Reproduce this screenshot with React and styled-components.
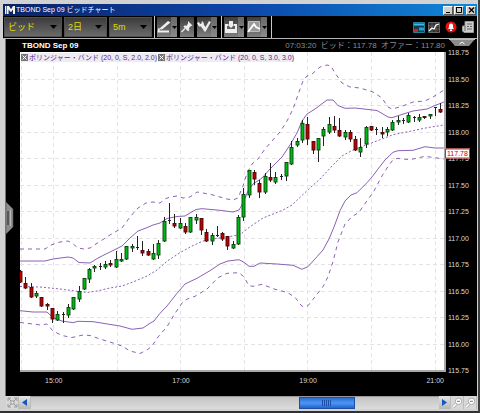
import React, { useState } from "react";
import styled, { createGlobalStyle, css } from "styled-components";

// top of wick, top of body, bottom of body, bottom of wick, kind (u = up, d = down, n = flat)
const candles = [
    [270, 271, 282, 282, "d"], [277, 283, 288, 288, "d"], [283, 287, 297, 297, "d"], [291, 293, 296, 297, "u"],
    [297, 297, 306, 306, "d"], [303, 304, 306, 309, "d"], [308, 308, 319, 322, "d"], [311, 314, 320, 320, "u"],
    [312, 314, 315, 322, "n"], [304, 307, 315, 317, "u"], [297, 297, 309, 309, "u"], [286, 291, 299, 301, "u"],
    [278, 278, 289, 289, "u"], [268, 269, 279, 282, "u"], [265, 266, 268, 271, "u"], [263, 266, 267, 269, "n"],
    [261, 264, 267, 268, "u"], [260, 263, 265, 266, "d"], [251, 259, 267, 267, "u"], [253, 259, 261, 261, "u"],
    [246, 246, 259, 259, "u"], [244, 246, 248, 251, "u"], [236, 247, 248, 249, "n"], [241, 250, 253, 255, "d"],
    [249, 251, 255, 255, "d"], [244, 253, 259, 259, "u"], [240, 243, 255, 258, "u"], [217, 221, 241, 241, "u"],
    [203, 220, 221, 223, "n"], [214, 223, 226, 227, "d"], [218, 223, 228, 228, "u"], [223, 226, 232, 233, "d"],
    [217, 217, 232, 232, "u"], [214, 217, 220, 223, "u"], [218, 218, 230, 234, "d"], [229, 232, 241, 241, "d"],
    [233, 235, 241, 244, "u"], [226, 235, 236, 236, "n"], [232, 233, 239, 240, "d"], [236, 236, 246, 249, "d"],
    [241, 244, 248, 248, "u"], [215, 217, 244, 244, "u"], [188, 194, 217, 220, "u"], [170, 170, 195, 197, "u"],
    [170, 172, 179, 184, "d"], [180, 183, 192, 197, "d"], [173, 176, 192, 193, "u"], [163, 177, 180, 181, "d"],
    [172, 177, 182, 183, "u"], [174, 176, 177, 179, "n"], [162, 162, 176, 180, "u"], [141, 147, 164, 164, "u"],
    [138, 141, 145, 146, "u"], [120, 123, 140, 142, "u"], [117, 124, 139, 144, "d"], [141, 141, 150, 153, "d"],
    [138, 138, 150, 161, "u"], [127, 129, 136, 145, "u"], [117, 124, 132, 133, "u"], [116, 126, 130, 132, "d"],
    [118, 130, 136, 136, "d"], [130, 132, 137, 139, "u"], [130, 132, 139, 141, "d"], [136, 139, 150, 150, "d"],
    [138, 147, 152, 156, "u"], [126, 127, 144, 147, "u"], [126, 126, 130, 130, "d"], [127, 129, 130, 134, "n"],
    [127, 132, 134, 137, "d"], [127, 129, 132, 135, "u"], [120, 122, 130, 130, "u"], [116, 120, 122, 124, "u"],
    [118, 120, 121, 123, "n"], [113, 115, 122, 122, "u"], [116, 117, 118, 121, "n"], [114, 117, 120, 121, "u"],
    [116, 116, 117, 118, "d"], [114, 114, 116, 118, "u"], [107, 107, 108, 115, "n"], [103, 109, 112, 112, "d"],
];

const bands = [
    {
        dash: "4 4",
        points: "20,249 45,249 51,245 60,242 68,241 72,243 78,248 84,249 90,248 99,242 110,235 122,228 130,217 138,208 146,203 153,202 160,203 165,199 170,197 177,196 183,198 190,197 197,192 203,193 213,195 220,197 227,199 233,200 238,198 243,186 247,173 252,164 258,159 265,149 272,141 280,132 287,121 293,109 299,92 303,81 307,76 312,74 320,67 327,65 331,66 335,73 342,83 350,87 360,88 373,92 382,98 388,107 392,109 400,107 413,102 425,101 433,97 444,90",
    },
    {
        points: "20,261 45,261 53,259 68,257 73,258 79,262.5 90,263 98,258 110,252 122,246 130,238 138,231 146,228 153,225 160,223 167,218.5 177,216.5 185,216 196,209.5 202,208.7 220,210.3 233,212 239,210 243,203 248,191 253,184 262,178 270,169 282,157 290,145 297,133 302,121 307,114 315,109 327,100 333,100 338,105.5 345,108.3 355,108 377,110.5 388,117 392,117.7 398,115.7 413,111 427,109 435,105.5 444,102",
    },
    {
        dash: "2 2",
        points: "20,286.5 40,287 60,289 75,291 87,292.5 97,291 110,288 122,286 133,282 147,276 157,270 168,260.5 180,252.7 192,246 203,241 217,238.3 230,236.5 240,234.7 250,226.7 263,218 283,210 292,205 307,190.7 320,179 333,165 342,156 353,150 366,145 382,139 393,134.7 413,130.7 427,127.7 444,125",
    },
    {
        points: "20,310.7 33,312 47,312 53,317.7 62,321 73,322.7 78,321.3 93,321.7 120,326 132,329.3 143,328 150,323.3 154,321 160,313.3 167,306 177,293.3 185,284 197,278.3 210,270.7 220,264 228,261 239,259.7 244,262.3 249,266.3 254,266.3 260,263 277,264 293,265.3 302,269.3 308,266.7 317,256.7 323,250 329,239 334,227 340,210.7 345,201 351,195 357,192.7 367,182.7 372,177 378,169 385,160 393,152.3 398,150.7 413,150.3 425,146.7 435,148 444,148",
    },
    {
        dash: "4 4",
        points: "20,322.5 33,324 41,325 47,324 53,331 62,335.5 72,337.5 83,335 90,335.5 100,339 110,342 122,346 130,351 140,353.5 147,350 152,346 158,337 167,326.7 175,313.3 183,301.7 188,298.7 195,296.3 207,289 218,277.7 227,273.3 239,272.7 244,277 249,285.7 253,286.3 262,284.3 275,289.3 287,292.3 295,297.3 302,306.3 308,305.7 313,299.3 323,286.7 328,276.7 333,261.7 338,242 345,224 352,216.7 359,212.3 367,200.7 373,192.7 382,176 387,168 392,161 397,158.3 410,159.7 425,156.3 444,159",
    },
];

const prices = ["118.75", "118.50", "118.25", "118.00", "117.75", "117.50", "117.25", "117.00", "116.75", "116.50", "116.25", "116.00", "115.75"];
const times = ["15:00", "17:00", "19:00", "21:00"];
const gridX = [21.5, 53.5, 117.5, 180.5, 244.5, 307.5, 371.5, 435.5];
const lastPrice = 117.78;

function Chart() {
    return (
        <ChartSvg viewBox="20 52 424 318" preserveAspectRatio="none" role="img" aria-label="TBOND Sep 09">
            <g stroke="#e4e4e4" strokeDasharray="4 3">
                {gridX.map((x) => <line key={x} x1={x} x2={x} y1="52" y2="370" />)}
                {prices.slice(1, -1).map((p, i) => {
                    const y = Math.round(52 + (i + 1) * 26.5) + 0.5;
                    return <line key={p} x1="20" x2="444" y1={y} y2={y} />
                })}
            </g>
            {bands.map((b, i) => (
                <polyline key={i} points={b.points} fill="none" stroke="#8a62b4" strokeWidth="1" strokeLinejoin="round" strokeDasharray={b.dash} />
            ))}
            {candles.map(([high, top, bottom, low, kind], i) => {
                const x = 20.5 + Math.round(i * 5.32);
                return (
                    <g key={i}>
                        <line x1={x} x2={x} y1={high} y2={low + 1} stroke="#222" />
                        {kind === "n"
                            ? <rect x={x - 1.5} y={top} width="3" height="1" fill="#222" />
                            : <rect x={x - 1.5} y={top + 0.5} width="3" height={Math.max(bottom - top - 0.5, 1)} fill={kind === "u" ? "#00b814" : "#c00000"} stroke={kind === "u" ? "#06460c" : "#4a0808"} strokeWidth="0.9" />}
                    </g>
                )
            })}
        </ChartSvg>
    )
}

function Legend({ text }) {
    return (
        <LegendItem>
            <LegendClose aria-label="削除">
                <svg width="7" height="7" viewBox="0 0 7 7"><path d="M1.5 1.5l4 4M5.5 1.5l-4 4" stroke="#fff" /></svg>
            </LegendClose>
            {text}
        </LegendItem>
    )
}

function Picker({ label, options, grow }) {
    return (
        <PickerBox $wide={grow}>
            <select aria-label={label}>
                {options.map((o) => <option key={o}>{o}</option>)}
            </select>
            <svg width="7" height="4" viewBox="0 0 7 4"><path d="M0 0h7L3.5 4z" fill="#000" /></svg>
        </PickerBox>
    )
}

function Tool({ label, split, children }) {
    return (
        <ToolButton aria-label={label}>
            <svg width="14" height="20" viewBox="0 0 14 20">{children}</svg>
            {split && <Split><svg width="5" height="3" viewBox="0 0 5 3"><path d="M0 0h5L2.5 3z" fill="#000" /></svg></Split>}
        </ToolButton>
    )
}

function ZoomIcon() {
    return (
        <svg width="11" height="11" viewBox="0 0 11 11">
            <path d="M1 10l3.5-3.5" stroke="#aaa" strokeWidth="3" />
            <path d="M1 10l3.5-3.5" stroke="#fff" strokeWidth="1.6" />
            <circle cx="6.5" cy="4.3" r="3.2" fill="#fff" stroke="#aaa" />
            <path d="M5 4.3h3" stroke="#777" />
        </svg>
    )
}

function App() {
    const [scroll, setScroll] = useState(76);
    const tagTop = ((118.75 - lastPrice) / 3) * 100;

    return (
        <Window>
            <GlobalStyle />
            <TitleBar>
                <svg width="10" height="8" viewBox="0 0 10 8"><path d="M0 0h1.4v8H0zM2 0h2l2 3.2L8 0h2v8H8V3.6L6.2 6H5.6L3.6 3.4V8H2z" fill="#f4f4dc" /></svg>
                <h1>TBOND Sep 09 ビッドチャート</h1>
                <WinButton aria-label="最小化"><svg width="9" height="8" viewBox="0 0 9 8"><path d="M2 6.5h4" stroke="#000" /></svg></WinButton>
                <WinButton aria-label="最大化"><svg width="9" height="8" viewBox="0 0 9 8"><path d="M1.5 1v5.5h5V1M1 1.5h6" stroke="#000" fill="none" /></svg></WinButton>
                <WinButton $apart aria-label="閉じる"><svg width="9" height="8" viewBox="0 0 9 8"><path d="M2 1.5l5 5M7 1.5l-5 5" stroke="#000" strokeWidth="1.3" /></svg></WinButton>
            </TitleBar>

            <ToolBar>
                <Picker label="価格" options={["ビッド", "オファー"]} grow />
                <Picker label="期間" options={["2日", "5日"]} />
                <Picker label="足" options={["5m", "15m"]} />
                <Group>
                    <Tool label="線を描く" split>
                        <path d="M2 12L11 4l2.5 1.5-8.500 7z" fill="#eee" />
                        <path d="M2 11.5L1.5 14.500h10.500" stroke="#eee" strokeWidth="1.8" fill="none" />
                    </Tool>
                    <Tool label="ピン">
                        <path d="M8 4l4.5 4.5-1.5.5-2 2 .3 2.4-1.300.8-4.5-4.5.9-1.300 2.200.3L8 6.500z" fill="#eee" />
                        <path d="M5 11.5L1.5 15" stroke="#eee" strokeWidth="1.3" />
                    </Tool>
                    <Tool label="設定" split>
                        <path d="M0 6l2-1 1 2 1.500-.5L5 4l1.500 1.500L7 8l3 4-2 3-4-5.500H2z" fill="#eee" />
                        <path d="M13 4.500L7.500 14" stroke="#eee" strokeWidth="2.2" />
                    </Tool>
                </Group>
                <Group>
                    <Tool label="保存" split>
                        <path d="M1 7h3v2H3v3h8V9h-1V7h3v9H1z" fill="#eee" />
                        <path d="M5 4h4v3.5h1.5L7 11 3.500 7.500H5z" fill="#eee" />
                    </Tool>
                    <Tool label="チャート種別" split>
                        <path d="M1.5 4.500h11v10h-11z" fill="#999" stroke="#bbb" />
                        <path d="M1 15L7 7l2 3 4 2" stroke="#fff" strokeWidth="1.8" fill="none" />
                    </Tool>
                </Group>
                <Shortcuts>
                    <IconButton aria-label="注文">
                        <svg width="12" height="11" viewBox="0 0 12 11"><path d="M.5.5h11v10H.5z" fill="#123c50" stroke="#2080a4" /><path d="M1 2.500h10" stroke="#42bce0" strokeWidth="2" /><path d="M1 7h4v3H1z" fill="#d02020" /><path d="M6 5.500h5v3H6z" fill="#28a0cc" /></svg>
                    </IconButton>
                    <IconButton aria-label="チャート">
                        <svg width="12" height="11" viewBox="0 0 12 11"><path d="M.5.5h11v10H.5z" fill="#303030" stroke="#666" /><path d="M4 0v11M8 0v11M0 4h12M0 7h12" stroke="#777" strokeWidth=".6" /><path d="M1 9l3-3 2 1 2-4 3-1" stroke="#fff" strokeWidth="1.3" fill="none" /></svg>
                    </IconButton>
                    <IconButton aria-label="アラート">
                        <svg width="12" height="12" viewBox="0 0 12 12"><circle cx="6" cy="6" r="5.5" fill="#e81010" /><path d="M3 8c1-1 1-2 1-3.500a2 2 0 014 0C8 6 8 7 9 8zM5 8.500h2V10H5z" fill="#fff" /></svg>
                    </IconButton>
                    <IconButton aria-label="ニュース">
                        <svg width="12" height="12" viewBox="0 0 12 12"><path d="M3 .5h8.500v11H2L.5 10V5H3z" fill="#ccc" stroke="#999" /><path d="M5 3h5M5 5.500h2M8 5.500h2M5 8h5M3 5v5" stroke="#666" /></svg>
                    </IconButton>
                </Shortcuts>
            </ToolBar>

            <Board>
                <Gutter>
                    <Handle aria-label="パネルを開く">
                        <svg width="8" height="32" viewBox="0 0 8 32"><path d="M0 0l7 7v18l-7 7z" fill="#8c8c8c" stroke="#555" strokeWidth=".6" /><path d="M2 9v14" stroke="#222" /><path d="M4.5 8v16" stroke="#bbb" /></svg>
                    </Handle>
                </Gutter>
                <Main>
                    <Header>
                        <h2>TBOND Sep 09</h2>
                        <p>07:03:20&nbsp; ビッド：117.78&nbsp; オファー：117.80</p>
                    </Header>
                    <Plot>
                        <Chart />
                        <Legends>
                            <Legend text="ボリンジャー・バンド (20, 0, S, 2.0, 2.0)" />
                            <Legend text="ボリンジャー・バンド (20, 0, S, 3.0, 3.0)" />
                        </Legends>
                    </Plot>
                    <TimeAxis>{times.map((t) => <span key={t}>{t}</span>)}</TimeAxis>
                </Main>
                <Side>
                    <Collapse aria-label="折りたたむ">
                        <svg width="26" height="8" viewBox="0 0 26 8"><path d="M0 0h26l-6 7H6z" fill="#8c8c8c" /><path d="M0 .5h26" stroke="#bbb" /><path d="M10.5 5L13 3l2.5 2" stroke="#fff" fill="none" /></svg>
                    </Collapse>
                    <PriceAxis>
                        {prices.map((p) => <span key={p}>{p}</span>)}
                        <TagTrack><Tag style={{ top: tagTop + "%" }}>{lastPrice}</Tag></TagTrack>
                    </PriceAxis>
                </Side>
            </Board>

            <ScrollRow>
                <SmallButton aria-label="全体表示">
                    <svg width="11" height="11" viewBox="0 0 11 11"><path d="M1 1l9 9M10 1l-9 9M1 4V1h3M7 1h3v3M10 7v3H7M4 10H1V7" stroke="#999" fill="none" /><path d="M4 4h3v3H4z" fill="#eee" stroke="#999" /></svg>
                </SmallButton>
                <SmallButton $raised aria-label="左へ"><svg width="5" height="7" viewBox="0 0 5 7"><path d="M5 0v7L0 3.5z" fill="#1458c8" /></svg></SmallButton>
                <Scroll type="range" aria-label="時間軸" value={scroll} onChange={(e) => setScroll(e.target.value)} />
                <SmallButton $raised aria-label="右へ"><svg width="5" height="7" viewBox="0 0 5 7"><path d="M0 0v7l5-3.5z" fill="#1458c8" /></svg></SmallButton>
                <SmallButton aria-label="縮小"><ZoomIcon /></SmallButton>
                <SmallButton aria-label="拡大"><ZoomIcon /></SmallButton>
            </ScrollRow>
        </Window>
    )
}

const GlobalStyle = createGlobalStyle`
*{
    box-sizing: border-box;
}
body{
    margin: 0;
    background: #d2d2d2;
    font-family: "Liberation Sans", "Noto Sans CJK JP", sans-serif;
}
h1, h2, p{
    margin: 0;
    white-space: nowrap;
}
button, select, input{
    margin: 0;
    padding: 0;
    border: 0;
    font: inherit;
}
svg{
    display: block;
    flex: none;
}
`;

const center = css`
    display: flex;
    align-items: center;
    justify-content: center;
`;

const Window = styled.div`
    display: grid;
    grid-template-rows: 12px 23px 1fr 13px;
    min-height: 100vh;
    padding: 4px 1px 2px 2px;
    background: #d2d2d2;
    border-right: 2px solid #404040;
    border-bottom: 2px solid #303030;
`;

const TitleBar = styled.header`
    display: flex;
    align-items: center;
    margin-left: 1px;
    padding: 0 1px 0 2px;
    background: linear-gradient(90deg, #0a2268, #0c46a8 50%, #1088d8);
    color: #fff;

    h1{
        flex: 1;
        padding-left: 1px;
        font-size: 7px;
        font-weight: 400;
        line-height: 12px;
    }
`;

const WinButton = styled.button`
    ${center}
    width: 10px;
    height: 9px;
    margin-left: ${(p) => (p.$apart ? "2px" : "1px")};
    background: #d2d0cc;
    border: 1px solid;
    border-color: #fff #555 #555 #fff;
`;

const ToolBar = styled.nav`
    display: flex;
    gap: 2px;
    margin-left: 1px;
    padding: 0 1px;
    background: #000;
    border-bottom: 1px solid #b4b4b4;
`;

const PickerBox = styled.label`
    display: grid;
    align-items: center;
    width: ${(p) => (p.$wide ? "58px" : "43px")};
    height: 20px;
    margin-top: 1px;
    background: linear-gradient(#3c3c3c, #6a6a6a);
    border: 1px solid #505050;

    select{
        grid-area: 1 / 1;
        width: 100%;
        height: 18px;
        padding-left: 3px;
        appearance: none;
        background: none;
        color: #e0dc00;
        font-size: 9px;
    }
    svg{
        grid-area: 1 / 1;
        justify-self: end;
        margin-right: 4px;
        pointer-events: none;
    }
`;

const Group = styled.div`
    display: flex;
    gap: 3px;
    padding: 1px 2px 0;
    border-left: 1px solid #c8c8c8;
`;

const ToolButton = styled.button`
    display: flex;
    height: 20px;
    background: linear-gradient(#3c3c3c, #808080);
`;

const Split = styled.span`
    ${center}
    width: 6px;
    height: 20px;
    background: linear-gradient(#666, #8c8c8c);
`;

const Shortcuts = styled.div`
    display: flex;
    flex: 1;
    align-items: center;
    justify-content: flex-end;
    gap: 3px;
    padding-right: 2px;
    border-left: 1px solid #c8c8c8;
`;

const IconButton = styled.button`
    ${center}
    min-width: 12px;
    height: 20px;
    background: none;

    &:nth-child(n + 3){
        margin-left: 2px;
    }
`;

const Board = styled.main`
    display: grid;
    grid-template-columns: 14px 1fr 31px;
    margin-left: 3px;
    background: #000;
    border-left: 1px solid #777;
`;

const Gutter = styled.div`
    display: flex;
    align-items: center;
`;

const Handle = styled.button`
    background: none;
`;

const Main = styled.section`
    display: grid;
    grid-template-rows: 13px 1fr 24px;
    min-width: 0;
`;

const Header = styled.div`
    display: flex;
    align-items: center;
    justify-content: space-between;
    padding: 0 1px 0 2px;
    font-size: 8px;
    line-height: 12px;

    h2{
        color: #fff;
        font-size: 8px;
    }
    p{
        color: #8c8c8c;
    }
`;

const Plot = styled.div`
    position: relative;
    display: grid;
    min-height: 0;
    background: #fff;
    border-right: 2px solid #a8a8a8;
    border-bottom: 2px solid #a8a8a8;
`;

const ChartSvg = styled.svg`
    width: 100%;
    height: 100%;
    min-height: 0;
    contain: size;
`;

const Legends = styled.div`
    position: absolute;
    top: 1px;
    left: 1px;
    display: flex;
    gap: 1px;
`;

const LegendItem = styled.div`
    display: flex;
    align-items: center;
    gap: 1px;
    height: 9px;
    background: #eeecf2;
    color: #5c2890;
    font-size: 7px;
    line-height: 9px;
    white-space: nowrap;
`;

const LegendClose = styled.button`
    background: #777;
`;

const TimeAxis = styled.div`
    display: flex;
    justify-content: space-between;
    padding: 4px 2px 0 25px;
    color: #d8d8d8;
    font-size: 7px;
    line-height: 10px;
`;

const Side = styled.aside`
    display: flex;
    flex-direction: column;
    padding-bottom: 20px;
`;

const Collapse = styled.button`
    align-self: flex-end;
    height: 9px;
    margin-right: 2px;
    background: none;

    svg{
        margin-bottom: 1px;
    }
`;

const PriceAxis = styled.div`
    position: relative;
    display: flex;
    flex: 1;
    flex-direction: column;
    justify-content: space-between;
    padding-left: 2px;
    color: #d8d8d8;
    font-size: 7px;
    line-height: 10px;
`;

const TagTrack = styled.div`
    position: absolute;
    inset: 0 0 10px;
`;

const Tag = styled.output`
    position: absolute;
    left: -1px;
    padding: 0 1px;
    background: #fff;
    border: 1px solid #c83030;
    color: #c00000;
    font-size: 7px;
    line-height: 8px;
    transform: translateY(-25%);
`;

const ScrollRow = styled.footer`
    display: flex;
    margin-left: 4px;
    background: #d2d2d2;
`;

const SmallButton = styled.button`
    ${center}
    width: ${(p) => (p.$raised ? "12px" : "13px")};
    background: ${(p) => (p.$raised ? "linear-gradient(#e4e4e4, #b8b8b8)" : "#d8d8d8")};
    border-right: 1px solid #bbb;
`;

const Scroll = styled.input`
    flex: 1;
    min-width: 0;
    height: 13px;
    appearance: none;
    background: linear-gradient(#c4c4c4, #dcdcdc);
    border-top: 1px solid #999;

    &::-webkit-slider-thumb{
        appearance: none;
        width: 56px;
        height: 12px;
        border: 1px solid #1c50a8;
        background:
            repeating-linear-gradient(90deg, #1c50a8 0 1px, transparent 1px 2px) center / 10px 6px no-repeat,
            linear-gradient(#2c6cd0, #4c98f4 50%, #2464c8);
    }
`;

export default App
